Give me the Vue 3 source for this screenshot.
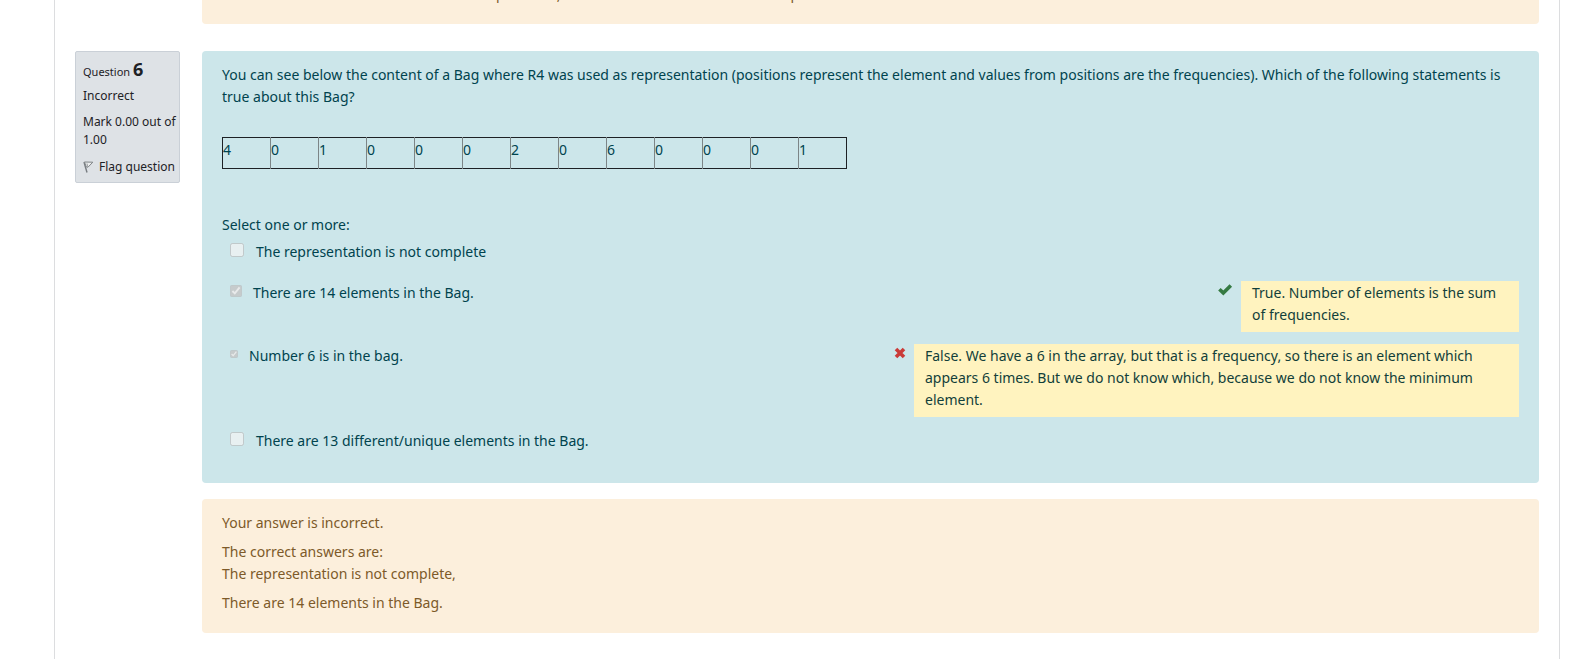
<script setup>
const cells = [4, 0, 1, 0, 0, 0, 2, 0, 6, 0, 0, 0, 1]

const answers = [
  { id: 'a0', text: 'The representation is not complete', checked: false, size: 'full' },
  {
    id: 'a1',
    text: 'There are 14 elements in the Bag.',
    checked: true,
    size: 'medium',
    correct: true,
    width: 'narrow',
    feedback: 'True. Number of elements is the sum of frequencies.'
  },
  {
    id: 'a2',
    text: 'Number 6 is in the bag.',
    checked: true,
    size: 'small',
    correct: false,
    width: 'wide',
    feedback:
      'False. We have a 6 in the array, but that is a frequency, so there is an element which appears 6 times. But we do not know which, because we do not know the minimum element.'
  },
  { id: 'a3', text: 'There are 13 different/unique elements in the Bag.', checked: false, size: 'full' }
]
</script>

<template>
  <main class="region">
    <section class="question">
      <div class="content">
        <div class="outcome previous">
          <p class="tail"><span>p</span><span>,</span><span>p</span></p>
        </div>
      </div>
    </section>

    <section class="question">
      <aside class="info">
        <h3 class="number">Question <b>6</b></h3>
        <p class="state">Incorrect</p>
        <p class="grade">Mark 0.00 out of 1.00</p>
        <a class="flag" href="#">
          <svg width="12" height="14" viewBox="0 0 12 14" aria-hidden="true">
            <path d="M1 2 L4 12.5" fill="none" stroke="#777c80" stroke-width="1.4" />
            <path d="M1.5 2 L9.8 2.2 L5 7.2 L3.2 6.8 Z" fill="#eceeef" stroke="#7f8487" stroke-width="1" />
            <path d="M4 3.5 L4.5 6.5" fill="none" stroke="#969a9d" stroke-width="1" />
          </svg>
          <span>Flag question</span>
        </a>
      </aside>

      <div class="content">
        <div class="formulation">
          <p class="qtext">
            You can see below the content of a Bag where R4 was used as representation (positions represent
            the element and values from positions are the frequencies). Which of the following statements is
            true about this Bag?
          </p>
          <table class="array">
            <tbody>
              <tr>
                <td v-for="(value, i) in cells" :key="i">{{ value }}</td>
              </tr>
            </tbody>
          </table>
          <p class="prompt">Select one or more:</p>
          <div class="answers">
            <div v-for="a in answers" :key="a.id" class="answer">
              <input :id="a.id" type="checkbox" :class="['box', a.size]" :checked="a.checked" disabled />
              <label :for="a.id">{{ a.text }}</label>
              <template v-if="a.feedback">
                <svg v-if="a.correct" class="mark" width="15" height="12" viewBox="0 0 15 12" role="img" aria-label="Correct">
                  <path d="M1.4 5.2 L5.3 8.9 L12.8 1.4" fill="none" stroke="#357a42" stroke-width="3.6" />
                </svg>
                <svg v-else class="mark" width="12" height="12" viewBox="0 0 12 12" role="img" aria-label="Incorrect">
                  <path d="M2 2 L10 10 M10 2 L2 10" fill="none" stroke="#ca3b38" stroke-width="3.6" />
                </svg>
                <div :class="['feedback', a.width]">{{ a.feedback }}</div>
              </template>
            </div>
          </div>
        </div>

        <div class="outcome">
          <p>Your answer is incorrect.</p>
          <p>The correct answers are:<br />The representation is not complete,</p>
          <p>There are 14 elements in the Bag.</p>
        </div>
      </div>
    </section>
  </main>
</template>

<style>
body {
  margin: 0;
  background: #fff;
}
</style>

<style scoped>
.region {
  box-sizing: border-box;
  min-height: 100vh;
  margin: 0 13px 0 54px;
  padding: 0 20px 24px;
  border: solid #dcdddf;
  border-width: 0 1px;
  font-family: "Noto Sans", "Open Sans", sans-serif;
  font-size: 14px;
  line-height: 22px;
}
p,
h3 {
  margin: 0;
}
.question {
  display: grid;
  grid-template-columns: 105px minmax(0, 1fr);
  column-gap: 22px;
  align-items: start;
}
.question + .question {
  margin-top: 27px;
}
.content {
  grid-column: 2;
}
.outcome {
  padding: 13px 20px 12px;
  border-radius: 4px;
  background: #fcefdc;
  color: #7d5a29;
}
.outcome p {
  margin-bottom: 7px;
}
.outcome.previous {
  padding-top: 0;
  padding-bottom: 21px;
  border-radius: 0 0 4px 4px;
}
.outcome .tail {
  display: flex;
  align-items: flex-end;
  height: 3px;
  margin: 0;
  padding-left: 274px;
  overflow: hidden;
  line-height: 16px;
}
.tail span:nth-child(2) {
  margin-left: 52px;
}
.tail span:nth-child(3) {
  margin-left: 230px;
}
.info {
  box-sizing: border-box;
  min-height: 132px;
  padding: 6px 1px 6px 7px;
  border: 1px solid #cad0d7;
  border-radius: 2px;
  background: #dee2e6;
  color: #1d2125;
  font-size: 12px;
  line-height: 18px;
}
.number {
  font-size: 11px;
  font-weight: 400;
  line-height: 22px;
}
.number b {
  font-size: 18px;
  font-weight: 700;
}
.state {
  margin-top: 4px;
}
.grade {
  margin-top: 8px;
}
.flag {
  display: flex;
  align-items: center;
  gap: 4px;
  margin-top: 9px;
  color: inherit;
  text-decoration: none;
  white-space: nowrap;
}
.formulation {
  margin-bottom: 16px;
  padding: 13px 20px 25px;
  border-radius: 4px;
  background: #cce6ea;
  color: #00434e;
}
.array {
  width: 625px;
  height: 32px;
  margin: 29px 0 45px;
  border: 1px solid #1d2125;
  border-collapse: collapse;
  table-layout: fixed;
}
.array td {
  padding: 1px 0 0;
  border-left: 1px solid #7c8587;
  vertical-align: top;
}
.array td:first-child {
  border-left-color: #1d2125;
}
.answers {
  display: grid;
  row-gap: 12px;
  margin-top: 4px;
}
.answer {
  display: flex;
  align-items: flex-start;
  min-height: 29px;
  padding-left: 8px;
}
.answer label {
  padding-top: 1px;
}
.box {
  flex: none;
  width: 14px;
  height: 14px;
  margin: 3px 12px 0 0;
}
.box.medium {
  width: 12px;
  height: 12px;
  margin-top: 4px;
  margin-right: 11px;
}
.box.small {
  width: 8px;
  height: 8px;
  margin-top: 6px;
  margin-right: 11px;
}
.mark {
  flex: none;
  margin: 3px 8px 0 auto;
}
.feedback {
  box-sizing: border-box;
  flex: none;
  padding: 1px 11px 6px;
  background: #fff3bf;
  color: #123f3a;
}
.narrow {
  width: 278px;
}
.wide {
  width: 605px;
}
</style>
